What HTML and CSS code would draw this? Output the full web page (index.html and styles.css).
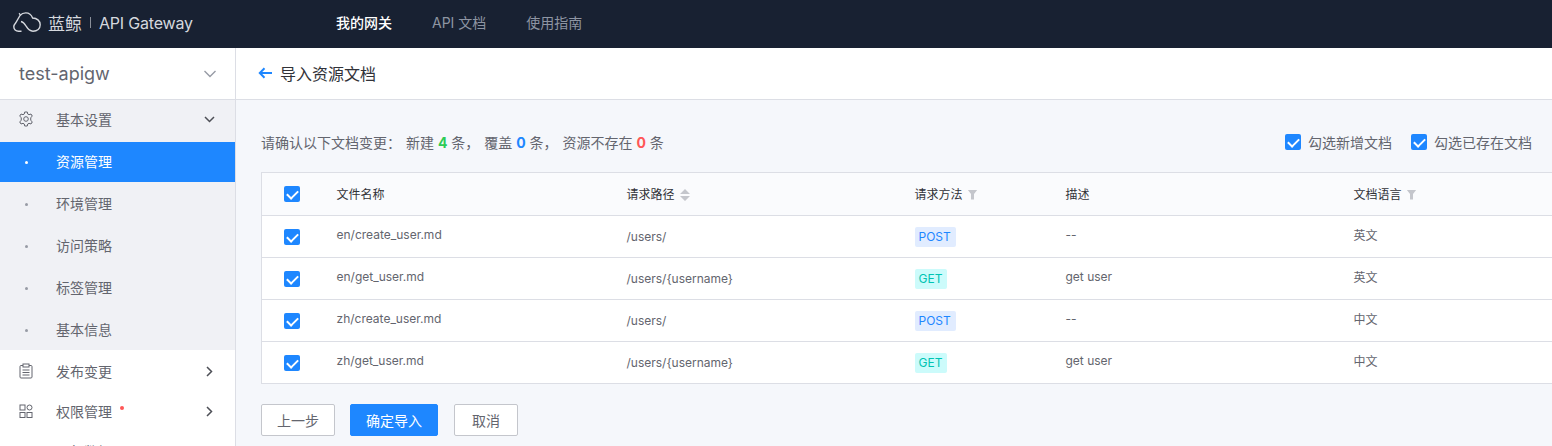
FILE: index.html
```html
<!DOCTYPE html>
<html lang="zh-CN">
<head>
    <meta charset="UTF-8">
    <meta name="viewport" content="width=device-width, initial-scale=1.0">
    <title>导入资源文档</title>
    <link rel="stylesheet" href="styles.css">
</head>
<body>
    <header class="topbar">
        <div class="logo">
            <svg class="logo-cloud" width="28" height="20" viewBox="0 0 28 20" fill="none" stroke="#d5d8de" stroke-width="1.4">
                <path d="M8.500 19.200H5.500C2.800 19.200 0.800 17.200 0.800 14.800C0.800 13.300 1.500 12.200 2.600 11L7 3.500C7.500 2.500 6.800 1.800 6 1.200"/>
                <path d="M7 3.500C8.500 1.800 10.500 0.900 12.800 0.900C16 0.900 18.500 3 19.600 6C23.800 6 27.200 8.800 27.200 12.800C27.200 16.600 24.200 19.200 20 19.200C16 19.200 14.500 16.500 13 14C11.800 12 10.500 10 8 9.500"/>
            </svg>
            <span class="logo-cn">蓝鲸</span>
            <span class="logo-sep"></span>
            <span class="logo-name">API Gateway</span>
        </div>
        <nav class="topnav">
            <a class="topnav-item active">我的网关</a>
            <a class="topnav-item">API 文档</a>
            <a class="topnav-item">使用指南</a>
        </nav>
    </header>

    <div class="layout">
        <aside class="sidebar">
            <div class="gw-select">
                <span>test-apigw</span>
                <svg width="14" height="8" viewBox="0 0 14 8" fill="none" stroke="#979ba5" stroke-width="1.4"><path d="M1.500 1L7 6.500L12.500 1"/></svg>
            </div>
            <ul class="menu">
                <li class="menu-group">
                    <div class="menu-row group-head">
                        <svg class="menu-icon" width="16" height="16" viewBox="0 0 16 16" fill="none" stroke="#63656e" stroke-width="1"><path d="M6.700 1H9.300L9.700 3C10.200 3.200 10.600 3.400 11 3.700L13 3L14.300 5.200L12.700 6.600C12.800 7.200 12.800 8.800 12.700 9.400L14.300 10.800L13 13L11 12.300C10.600 12.600 10.200 12.800 9.700 13L9.300 15H6.700L6.300 13C5.800 12.800 5.400 12.600 5 12.300L3 13L1.700 10.800L3.300 9.400C3.200 8.800 3.200 7.200 3.300 6.600L1.700 5.200L3 3L5 3.700C5.400 3.400 5.800 3.200 6.300 3Z"/><circle cx="8" cy="8" r="2.300"/></svg>
                        <span>基本设置</span>
                        <svg class="menu-arrow down" width="11" height="7" viewBox="0 0 11 7" fill="none" stroke="#4d4f56" stroke-width="1.500"><path d="M1 1L5.500 5.500L10 1"/></svg>
                    </div>
                    <ul class="submenu">
                        <li class="sub-row active">资源管理</li>
                        <li class="sub-row">环境管理</li>
                        <li class="sub-row">访问策略</li>
                        <li class="sub-row">标签管理</li>
                        <li class="sub-row">基本信息</li>
                    </ul>
                </li>
                <li class="menu-row">
                    <svg class="menu-icon" width="16" height="16" viewBox="0 0 16 16" fill="none" stroke="#63656e" stroke-width="1"><path d="M5 2.500H3C2.400 2.500 2 2.900 2 3.500V14C2 14.600 2.400 15 3 15H13C13.600 15 14 14.600 14 14V3.500C14 2.900 13.600 2.500 13 2.500H11"/><rect x="5" y="1" width="6" height="3"/><path d="M4.500 7H11.500M4.500 9.500H11.500M4.500 12H11.500"/></svg>
                    <span>发布变更</span>
                    <svg class="menu-arrow" width="7" height="11" viewBox="0 0 7 11" fill="none" stroke="#4d4f56" stroke-width="1.500"><path d="M1 1L5.500 5.500L1 10"/></svg>
                </li>
                <li class="menu-row">
                    <svg class="menu-icon" width="16" height="16" viewBox="0 0 16 16" fill="none" stroke="#63656e" stroke-width="1"><rect x="2" y="2" width="5" height="5"/><circle cx="11.500" cy="4.500" r="2.500"/><rect x="2" y="9.500" width="5" height="5"/><rect x="9" y="9.500" width="5" height="5"/></svg>
                    <span class="with-dot">权限管理</span>
                    <svg class="menu-arrow" width="7" height="11" viewBox="0 0 7 11" fill="none" stroke="#4d4f56" stroke-width="1.500"><path d="M1 1L5.500 5.500L1 10"/></svg>
                </li>
                <li class="menu-row"><span>运行数据</span></li>
            </ul>
        </aside>

        <main class="main">
            <div class="page-head">
                <svg width="14" height="12" viewBox="0 0 14 12" fill="none" stroke="#1e87ff" stroke-width="2"><path d="M14 6H2M6.500 1.300L1.800 6L6.500 10.700"/></svg>
                <h1>导入资源文档</h1>
            </div>
            <div class="content">
                <div class="summary">
                    <p class="summary-text">请确认以下文档变更： <span class="gap">新建 <b class="green">4</b> 条，</span> <span class="gap">覆盖 <b class="blue">0</b> 条，</span> <span class="gap">资源不存在 <b class="red">0</b> 条</span></p>
                    <div class="summary-checks">
                        <label class="check-label"><span class="check"></span>勾选新增文档</label>
                        <label class="check-label"><span class="check"></span>勾选已存在文档</label>
                    </div>
                </div>
                <table class="doc-table">
                    <colgroup>
                        <col class="col-check"><col class="col-file"><col class="col-path"><col class="col-method"><col class="col-desc"><col class="col-lang">
                    </colgroup>
                    <thead>
                        <tr>
                            <th class="cell-check"><span class="check"></span></th>
                            <th>文件名称</th>
                            <th>请求路径<svg class="sort" width="10" height="12" viewBox="0 0 10 12" fill="#c4c6cc"><path d="M5 0L10 5H0ZM0 7H10L5 12Z"/></svg></th>
                            <th>请求方法<i class="filter"></i></th>
                            <th>描述</th>
                            <th>文档语言<i class="filter"></i></th>
                        </tr>
                    </thead>
                    <tbody>
                        <tr>
                            <td class="cell-check"><span class="check"></span></td>
                            <td>en/create_user.md</td>
                            <td class="low">/users/</td>
                            <td class="low"><span class="tag post">POST</span></td>
                            <td>--</td>
                            <td>英文</td>
                        </tr>
                        <tr>
                            <td class="cell-check"><span class="check"></span></td>
                            <td>en/get_user.md</td>
                            <td class="low">/users/{username}</td>
                            <td class="low"><span class="tag get">GET</span></td>
                            <td>get user</td>
                            <td>英文</td>
                        </tr>
                        <tr>
                            <td class="cell-check"><span class="check"></span></td>
                            <td>zh/create_user.md</td>
                            <td class="low">/users/</td>
                            <td class="low"><span class="tag post">POST</span></td>
                            <td>--</td>
                            <td>中文</td>
                        </tr>
                        <tr>
                            <td class="cell-check"><span class="check"></span></td>
                            <td>zh/get_user.md</td>
                            <td class="low">/users/{username}</td>
                            <td class="low"><span class="tag get">GET</span></td>
                            <td>get user</td>
                            <td>中文</td>
                        </tr>
                    </tbody>
                </table>
                <div class="actions">
                    <button class="btn btn-prev">上一步</button>
                    <button class="btn btn-primary">确定导入</button>
                    <button class="btn btn-cancel">取消</button>
                </div>
            </div>
        </main>
    </div>
</body>
</html>
```

FILE: styles.css
```css
* {
    box-sizing: border-box;
}
html, body {
    height: 100%;
}
body {
    margin: 0;
    overflow: hidden;
    font-family: Inter, "Noto Sans CJK SC", sans-serif;
    font-size: 12px;
    color: #63656e;
    background-color: #f5f7fb;
}
ul {
    list-style: none;
    margin: 0;
    padding: 0;
}

/* top bar */
.topbar {
    display: flex;
    align-items: center;
    height: 48px;
    background-color: #182132;
}
.logo {
    display: flex;
    align-items: center;
    width: 336px;
    padding: 0 0 3px 13px;
    color: #d5d8de;
}
.logo-cloud {
    margin: 0 7px 2px 0;
}
.logo-cn {
    font-size: 17px;
}
.logo-sep {
    width: 1px;
    height: 11px;
    margin: 0 8px;
    background-color: #8a8f99;
}
.logo-name {
    font-size: 16px;
    letter-spacing: -0.2px;
}
.topnav {
    display: flex;
    gap: 40px;
    padding-bottom: 5px;
}
.topnav-item {
    font-size: 14px;
    color: #8e95a3;
}
.topnav-item.active {
    font-weight: 500;
    color: #fff;
}

.layout {
    display: flex;
    height: 398px;
}

/* side menu */
.sidebar {
    flex: none;
    width: 236px;
    overflow: hidden;
    background-color: #fff;
    border-right: 1px solid #dcdee5;
}
.gw-select {
    display: flex;
    align-items: center;
    justify-content: space-between;
    height: 52px;
    padding: 0 18px 0 19px;
    font-size: 18px;
    color: #63656e;
    border-bottom: 1px solid #dcdee5;
}
.menu-group {
    background-color: #f0f1f5;
}
.menu-row {
    display: flex;
    align-items: center;
    height: 40px;
    padding: 0 0 2px 18px;
    font-size: 14px;
}
.group-head {
    margin-bottom: 2px;
}
.menu-icon {
    flex: none;
    margin-right: 22px;
}
.menu-row > span {
    width: 56px;
    white-space: nowrap;
}
.menu-arrow {
    margin-left: auto;
    margin-right: 22px;
}
.menu-arrow.down {
    margin-right: 20px;
}
.menu-row:last-child > span {
    margin-left: 38px;
}
.with-dot {
    position: relative;
}
.with-dot::after {
    content: "";
    position: absolute;
    top: 5px;
    right: -12px;
    width: 4px;
    height: 4px;
    border-radius: 50%;
    background-color: #ff5656;
}
.sub-row {
    position: relative;
    height: 40px;
    line-height: 40px;
    margin-bottom: 2px;
    padding-left: 56px;
    font-size: 14px;
}
.sub-row::before {
    content: "";
    position: absolute;
    left: 25px;
    top: 19px;
    width: 3px;
    height: 3px;
    border-radius: 50%;
    background-color: #979ba5;
}
.sub-row.active {
    color: #fff;
    background-color: #1e87ff;
}
.sub-row.active::before {
    background-color: #fff;
}

/* main area */
.main {
    flex: 1;
    min-width: 0;
    overflow: hidden;
}
.page-head {
    display: flex;
    align-items: center;
    gap: 8px;
    height: 52px;
    padding: 0 0 2px 22px;
    background-color: #fff;
    border-bottom: 1px solid #dcdee5;
}
.page-head h1 {
    margin: 0;
    font-size: 16px;
    font-weight: 400;
    color: #313238;
}
.content {
    padding: 30px 20px 0 25px;
}
.summary {
    display: flex;
    align-items: center;
    justify-content: space-between;
    height: 24px;
    margin-bottom: 18px;
}
.summary-text {
    margin: 0;
    font-size: 14px;
}
.gap {
    margin-left: 1px;
}
.summary-text b {
    font-weight: 700;
}
.green {
    color: #2dcb56;
}
.blue {
    color: #1e87ff;
}
.red {
    color: #ff5656;
}
.summary-checks {
    display: flex;
    gap: 19px;
}
.check-label {
    display: flex;
    align-items: center;
    gap: 7px;
    font-size: 14px;
}
.check {
    position: relative;
    display: inline-block;
    width: 16px;
    height: 16px;
    border-radius: 2px;
    background-color: #1e87ff;
    vertical-align: top;
}
.check::after {
    content: "";
    position: absolute;
    left: 5px;
    top: 2px;
    width: 5px;
    height: 9px;
    border: solid #fff;
    border-width: 0 2px 2px 0;
    transform: rotate(45deg);
}

/* table */
.doc-table {
    width: 1320px;
    table-layout: fixed;
    border-collapse: collapse;
    background-color: #fff;
    border: 1px solid #dcdee5;
}
.col-check {
    width: 60px;
}
.col-file {
    width: 290px;
}
.col-path {
    width: 288px;
}
.col-method {
    width: 151px;
}
.col-desc {
    width: 288px;
}
th {
    height: 43px;
    padding: 0 0 2px 15px;
    text-align: left;
    font-weight: 400;
    color: #313238;
    background-color: #fafbfd;
    border-bottom: 1px solid #dcdee5;
}
td {
    height: 42px;
    padding: 0 0 4px 15px;
    border-bottom: 1px solid #dcdee5;
}
tbody tr:last-child td {
    border-bottom: none;
}
td.low {
    padding-bottom: 0;
}
th.cell-check, td.cell-check {
    padding: 0 0 0 22px;
}
.sort {
    margin-left: 5px;
    vertical-align: -2px;
}
.filter {
    display: inline-block;
    width: 10px;
    height: 10px;
    margin-left: 5px;
    vertical-align: -1px;
    background-color: #c4c6cc;
    clip-path: polygon(0 0, 100% 0, 65% 45%, 65% 100%, 35% 100%, 35% 45%);
}
.tag {
    display: inline-block;
    height: 20px;
    line-height: 20px;
    padding: 0 5px 0 4px;
    border-radius: 2px;
}
.tag.post {
    color: #1e87ff;
    background-color: #e1ecff;
}
.tag.get {
    color: #00c4b3;
    background-color: #ccfbfb;
}

/* buttons */
.actions {
    display: flex;
    gap: 16px;
    margin-top: 20px;
}
.btn {
    height: 32px;
    padding: 0;
    font-family: inherit;
    font-size: 14px;
    color: #63656e;
    background-color: #fff;
    border: 1px solid #c4c6cc;
    border-radius: 2px;
}
.btn-prev {
    width: 74px;
    margin-right: -1px;
}
.btn-primary {
    width: 88px;
    color: #fff;
    background-color: #1e87ff;
    border-color: #1e87ff;
}
.btn-cancel {
    width: 64px;
}
```
